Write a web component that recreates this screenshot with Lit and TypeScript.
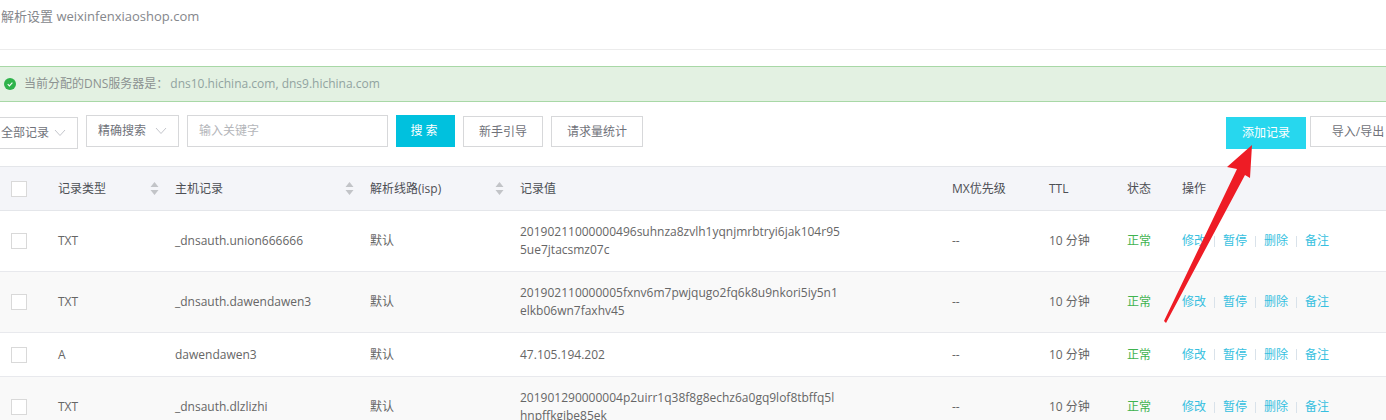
import { LitElement, html, css, svg } from "lit";
import { customElement } from "lit/decorators.js";

interface Rec { type: string; host: string; value: string[]; tall: boolean }

const rows: Rec[] = [
  { type: "TXT", host: "_dnsauth.union666666", value: ["20190211000000496suhnza8zvlh1yqnjmrbtryi6jak104r95", "5ue7jtacsmz07c"], tall: true },
  { type: "TXT", host: "_dnsauth.dawendawen3", value: ["201902110000005fxnv6m7pwjqugo2fq6k8u9nkori5iy5n1", "elkb06wn7faxhv45"], tall: true },
  { type: "A", host: "dawendawen3", value: ["47.105.194.202"], tall: false },
  { type: "TXT", host: "_dnsauth.dlzlizhi", value: ["201901290000004p2uirr1q38f8g8echz6a0gq9lof8tbffq5l", "hnpffkgjbe85ek"], tall: true },
];

const chevron = html`<svg class="chev" width="12" height="8" viewBox="0 0 12 8"><path d="M1 1l5 5.5L11 1" fill="none" stroke="#c4c6cc" stroke-width="1"/></svg>`;
const sort = html`<svg class="sort" width="9" height="13" viewBox="0 0 9 13"><path d="M4.5 0L8.5 5H.5z M.5 8h8l-4 5z" fill="#c2c4c8"/></svg>`;
const check = svg`<path d="M3.7 6.2l1.7 1.7 3-3.2" fill="none" stroke="#fff" stroke-width="1.1"/>`;

@customElement("app-root")
export class AppRoot extends LitElement {
  static styles = css`
    :host {
      display: block;
      position: relative;
      width: 1386px;
      height: 420px;
      overflow: hidden;
      background: #fff;
      font: 12px/18px "Open Sans", "Noto Sans CJK SC", sans-serif;
      color: #666;
    }
    .title {
      height: 49px;
      padding: 7px 0 0 1px;
      box-sizing: border-box;
      border-bottom: 1px solid #ececec;
      height: 50px;
      font-size: 13px;
      color: #85878c;
    }
    .alert {
      display: flex;
      align-items: center;
      gap: 8px;
      margin-top: 16px;
      height: 36px;
      box-sizing: border-box;
      padding-left: 4px;
      background: #e3f1e2;
      border-top: 1px solid #a8d8a6;
      border-bottom: 1px solid #a8d8a6;
      color: #8c9291;
    }
    .dns { margin-left: 2px; color: #91a3a0; }
    .bar {
      display: flex;
      align-items: flex-start;
      gap: 8px;
      margin-top: 13px;
      height: 33px;
      margin-right: -20px;
    }
    .box {
      display: flex;
      align-items: center;
      box-sizing: border-box;
      height: 32px;
      border: 1px solid #d7d8da;
      color: #70727a;
      background: #fff;
      white-space: nowrap;
    }
    .sel { justify-content: space-between; padding: 0 11px 0 11px; }
    .all { width: 89px; margin-left: -11px; margin-top: 2px; }
    .exact { width: 93px; margin-left: 0; }
    .kw { width: 201px; padding-left: 11px; color: #b4b6ba; }
    .btn { justify-content: center; }
    .search { width: 59px; background: #00c1de; border: 0; color: #fff; letter-spacing: 3px; height: 32px; }
    .guide { width: 80px; margin-top: 1px; height: 31px; }
    .stats { width: 92px; margin-top: 1px; height: 31px; }
    .spacer { flex: 1; }
    .add { width: 80px; background: #27d7ee; border: 0; color: #fff; margin-top: 2px; margin-right: -4px; height: 32px; }
    .io { width: 96px; height: 31px; margin-top: 1px; }
    .row {
      display: grid;
      grid-template-columns: 58px 117px 195px 150px 432px 97px 78px 55px 1fr;
      align-items: center;
      box-sizing: border-box;
      border-bottom: 1px solid #e8e9ed;
      min-height: 44px;
    }
    .head {
      margin-top: 18px;
      height: 45px;
      background: #f4f5f9;
      border-top: 1px solid #e4e6ea;
      border-bottom: 1px solid #e4e6ea;
      color: #4d4f55;
    }
    .rec.tall { height: 61px; }
    .rec.short { height: 44px; }
    .rec:nth-of-type(even) { background: #f9f9f9; }
    .th { display: flex; align-items: center; justify-content: space-between; padding-right: 16px; }
    .cb {
      display: block;
      width: 16px;
      height: 16px;
      box-sizing: border-box;
      margin-left: 11px;
      background: #fff;
      border: 1px solid #d9d9d9;
    }
    .line { white-space: nowrap; }
    .ok { color: #3fb34f; }
    .ops { display: flex; align-items: center; color: #36bfe0; white-space: nowrap; }
    .sep { width: 1px; height: 11px; margin: 0 8px; background: #d9e2ea; }
    .arrow { position: absolute; left: 0; top: 0; pointer-events: none; }
  `;

  render() {
    return html`
      <div class="title">解析设置 weixinfenxiaoshop.com</div>
      <div class="alert">
        <svg width="12" height="12" viewBox="0 0 12 12"><circle cx="6" cy="6" r="6" fill="#2eb34a"/>${check}</svg>
        <span>当前分配的DNS服务器是：<span class="dns">dns10.hichina.com, dns9.hichina.com</span></span>
      </div>
      <div class="bar">
        <div class="box sel all">全部记录${chevron}</div>
        <div class="box sel exact">精确搜索${chevron}</div>
        <div class="box kw">输入关键字</div>
        <div class="box btn search">搜索</div>
        <div class="box btn guide">新手引导</div>
        <div class="box btn stats">请求量统计</div>
        <div class="spacer"></div>
        <div class="box btn add">添加记录</div>
        <div class="box btn io">导入/导出</div>
      </div>
      <div class="row head">
        <span class="cb"></span>
        <div class="th">记录类型${sort}</div>
        <div class="th">主机记录${sort}</div>
        <div class="th">解析线路(isp)${sort}</div>
        <div>记录值</div>
        <div>MX优先级</div>
        <div>TTL</div>
        <div>状态</div>
        <div>操作</div>
      </div>
      ${rows.map(
        (r) => html`
          <div class="row rec ${r.tall ? "tall" : "short"}">
            <span class="cb"></span>
            <div>${r.type}</div>
            <div>${r.host}</div>
            <div>默认</div>
            <div>${r.value.map((l) => html`<div class="line">${l}</div>`)}</div>
            <div>--</div>
            <div>10 分钟</div>
            <div class="ok">正常</div>
            <div class="ops">
              <span>修改</span><i class="sep"></i><span>暂停</span><i class="sep"></i><span>删除</span><i class="sep"></i><span>备注</span>
            </div>
          </div>
        `
      )}
      <svg class="arrow" width="1386" height="420" viewBox="0 0 1386 420">
        <path d="M1252 145L1227 167L1237 169L1164 321L1166 323L1245 175L1250 178Z" fill="#ee1c25"/>
      </svg>
    `;
  }
}
